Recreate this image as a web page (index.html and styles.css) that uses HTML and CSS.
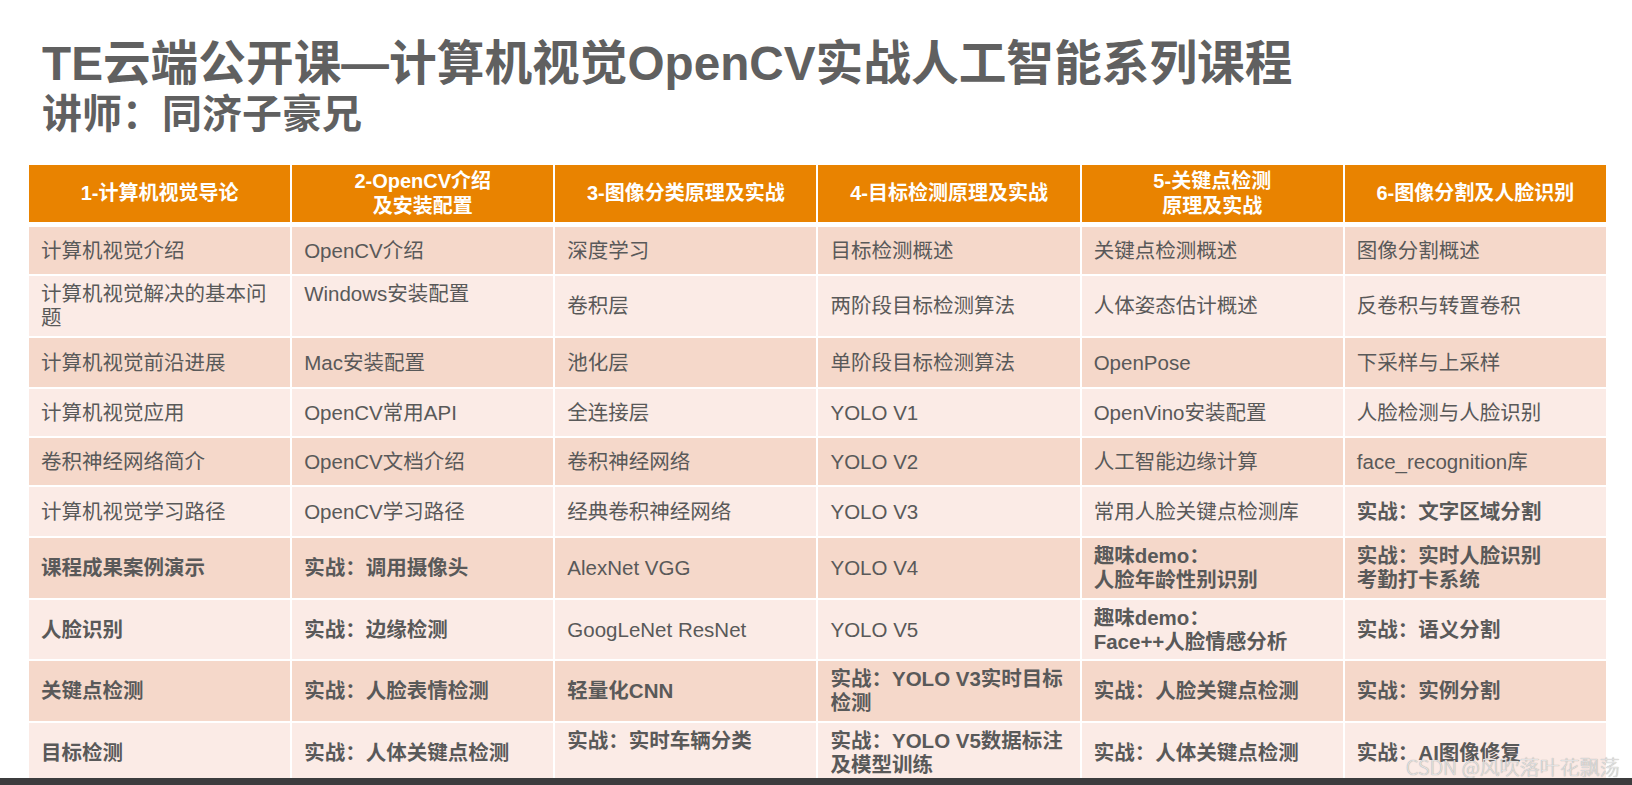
FILE: index.html
```html
<!DOCTYPE html>
<html lang="zh-CN">
<head>
<meta charset="utf-8">
<title>TE云端公开课</title>
<link rel="stylesheet" href="styles.css">
</head>
<body>
<div class="page">
  <div class="titles">
    <h1 class="title">TE云端公开课—计算机视觉OpenCV实战人工智能系列课程</h1>
    <h2 class="subtitle">讲师：同济子豪兄</h2>
  </div>
  <div class="grid">
    <div class="hd">1-计算机视觉导论</div>
    <div class="hd">2-OpenCV介绍<br>及安装配置</div>
    <div class="hd">3-图像分类原理及实战</div>
    <div class="hd">4-目标检测原理及实战</div>
    <div class="hd">5-关键点检测<br>原理及实战</div>
    <div class="hd">6-图像分割及人脸识别</div>

    <div class="c odd">计算机视觉介绍</div>
    <div class="c odd">OpenCV介绍</div>
    <div class="c odd">深度学习</div>
    <div class="c odd">目标检测概述</div>
    <div class="c odd">关键点检测概述</div>
    <div class="c odd">图像分割概述</div>

    <div class="c even">计算机视觉解决的基本问<br>题</div>
    <div class="c even">Windows安装配置<br>&nbsp;</div>
    <div class="c even">卷积层</div>
    <div class="c even">两阶段目标检测算法</div>
    <div class="c even">人体姿态估计概述</div>
    <div class="c even">反卷积与转置卷积</div>

    <div class="c odd">计算机视觉前沿进展</div>
    <div class="c odd">Mac安装配置</div>
    <div class="c odd">池化层</div>
    <div class="c odd">单阶段目标检测算法</div>
    <div class="c odd">OpenPose</div>
    <div class="c odd">下采样与上采样</div>

    <div class="c even">计算机视觉应用</div>
    <div class="c even">OpenCV常用API</div>
    <div class="c even">全连接层</div>
    <div class="c even">YOLO V1</div>
    <div class="c even">OpenVino安装配置</div>
    <div class="c even">人脸检测与人脸识别</div>

    <div class="c odd">卷积神经网络简介</div>
    <div class="c odd">OpenCV文档介绍</div>
    <div class="c odd">卷积神经网络</div>
    <div class="c odd">YOLO V2</div>
    <div class="c odd">人工智能边缘计算</div>
    <div class="c odd">face_recognition库</div>

    <div class="c even">计算机视觉学习路径</div>
    <div class="c even">OpenCV学习路径</div>
    <div class="c even">经典卷积神经网络</div>
    <div class="c even">YOLO V3</div>
    <div class="c even">常用人脸关键点检测库</div>
    <div class="c even b">实战：文字区域分割</div>

    <div class="c odd b">课程成果案例演示</div>
    <div class="c odd b">实战：调用摄像头</div>
    <div class="c odd">AlexNet VGG</div>
    <div class="c odd">YOLO V4</div>
    <div class="c odd b">趣味demo：<br>人脸年龄性别识别</div>
    <div class="c odd b">实战：实时人脸识别<br>考勤打卡系统</div>

    <div class="c even b">人脸识别</div>
    <div class="c even b">实战：边缘检测</div>
    <div class="c even">GoogLeNet ResNet</div>
    <div class="c even">YOLO V5</div>
    <div class="c even b">趣味demo：<br>Face++人脸情感分析</div>
    <div class="c even b">实战：语义分割</div>

    <div class="c odd b">关键点检测</div>
    <div class="c odd b">实战：人脸表情检测</div>
    <div class="c odd b">轻量化CNN</div>
    <div class="c odd b">实战：YOLO V3实时目标<br>检测</div>
    <div class="c odd b">实战：人脸关键点检测</div>
    <div class="c odd b">实战：实例分割</div>

    <div class="c even b">目标检测</div>
    <div class="c even b">实战：人体关键点检测</div>
    <div class="c even b">实战：实时车辆分类<br>&nbsp;</div>
    <div class="c even b">实战：YOLO V5数据标注<br>及模型训练</div>
    <div class="c even b">实战：人体关键点检测</div>
    <div class="c even b">实战：AI图像修复</div>
  </div>
</div>
<div class="watermark">CSDN @风吹落叶花飘荡</div>
<div class="bottom-bar"></div>
</body>
</html>
```

FILE: styles.css
```css
html, body {
  margin: 0;
  padding: 0;
  background: #ffffff;
  overflow: hidden;
}

body {
  font-family: "Liberation Sans", "Noto Sans CJK SC", sans-serif;
  color: #595959;
}

.page {
  padding-top: 38px;
}

.titles {
  padding-left: 42px;
}

.title {
  margin: 0;
  font-size: 47.7px;
  line-height: 52px;
  font-weight: 700;
  color: #606060;
  white-space: nowrap;
}

.subtitle {
  margin: 0;
  font-size: 40px;
  line-height: 48px;
  font-weight: 700;
  color: #606060;
}

.grid {
  margin-top: 27px;
  margin-left: 29px;
  width: 1577px;
  display: grid;
  grid-template-columns: repeat(6, 1fr);
  grid-template-rows: 60px 47px 60px 49px 47px 47px 49px 60px 59px 60px 60px;
  column-gap: 2px;
  row-gap: 2px;
}

.hd {
  margin-bottom: 3px;
  background: #e98300;
  color: #ffffff;
  font-weight: 700;
  font-size: 20px;
  line-height: 25px;
  display: flex;
  align-items: center;
  justify-content: center;
  text-align: center;
}

.c {
  display: flex;
  align-items: center;
  padding: 0 12px;
  font-size: 20.5px;
  line-height: 24px;
  color: #595959;
  white-space: nowrap;
}

.odd {
  background: #f5d8ca;
}

.even {
  background: #fbebe6;
}

.b {
  font-weight: 700;
}

.watermark {
  position: absolute;
  left: 1406px;
  top: 754px;
  font-family: "Noto Sans CJK SC", sans-serif;
  font-size: 20px;
  line-height: 26px;
  font-weight: 300;
  color: #e2e2e2;
  text-shadow: 0 0 1px #8a8a8a;
  white-space: nowrap;
}

.bottom-bar {
  position: fixed;
  left: 0;
  right: 0;
  bottom: 0;
  height: 7px;
  background: #3c3c3e;
}
```
